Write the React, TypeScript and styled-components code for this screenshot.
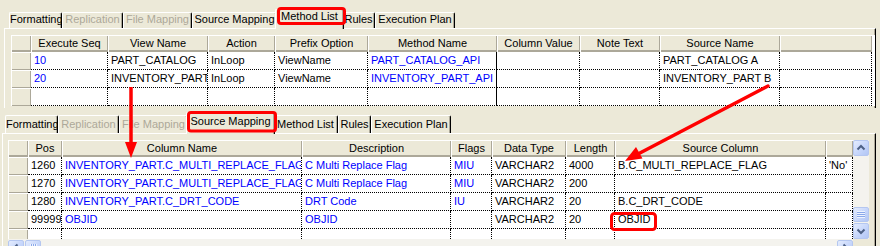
import React from "react";
import styled, { createGlobalStyle } from "styled-components";

const GlobalStyle = createGlobalStyle`
  html, body { margin: 0; padding: 0; background: #ece9d8; }
  body { font-family: "Liberation Sans", Arial, sans-serif; font-size: 11px; color: #000; }
  * { box-sizing: border-box; }
`;

const Screen = styled.div`
  position: relative;
  width: 880px;
  height: 246px;
  overflow: hidden;
  background: #ece9d8;
`;

const Shot = styled.section<{ $height: number; $top: number; $left: number }>`
  height: ${p => p.$height}px;
  padding: ${p => p.$top}px 0 0 ${p => p.$left}px;
  overflow: hidden;
  display: flex;
  flex-direction: column;
`;

const TabStrip = styled.div<{ $height: number; $inset: number; $textTop: number }>`
  flex: none;
  display: flex;
  align-items: flex-end;
  height: ${p => p.$height}px;
  padding-left: ${p => p.$inset}px;
  position: relative;
  z-index: 1;
  --text-top: ${p => p.$textTop}px;
`;

const Tab = styled.div<{ $active?: boolean; $disabled?: boolean; $width: number }>`
  position: relative;
  flex: none;
  z-index: ${p => (p.$active ? 2 : 1)};
  width: ${p => (p.$active ? p.$width + 4 : p.$width)}px;
  height: ${p => (p.$active ? "calc(100% + 1px)" : "calc(100% - 3px)")};
  margin: ${p => (p.$active ? "0 -2px -1px" : "0")};
  padding-top: var(--text-top);
  background: #ece9d8;
  border-top: 1px solid #fff;
  border-left: 1px solid #fff;
  border-right: 1px solid #000;
  border-radius: 2px 2px 0 0;
  box-shadow: inset -1px 0 #aca899;
  color: ${p => (p.$disabled ? "#aca899" : "#000")};
  text-align: center;
  line-height: 13px;
  white-space: nowrap;
`;

const Panel = styled.div<{ $width: number; $padLeft: number }>`
  flex: 1 0 auto;
  width: ${p => p.$width}px;
  border-top: 1px solid #fff;
  border-left: 1px solid #fff;
  border-right: 1px solid #000;
  box-shadow: inset -1px 0 #aca899;
  padding: 6px 0 0 ${p => p.$padLeft}px;
`;

const GridBox = styled.div<{ $template: string; $height?: number }>`
  display: grid;
  grid-template-columns: ${p => p.$template};
  grid-template-rows: 17px;
  grid-auto-rows: 18px;
  align-content: start;
  background: #fff;
  overflow: hidden;
  height: ${p => (p.$height ? `${p.$height}px` : "auto")};
`;

const HeadCell = styled.div`
  background: #ece9d8;
  box-shadow: inset 1px 1px 0 #fff, inset -1px -2px 0 #aca899;
  text-align: center;
  line-height: 16px;
  white-space: nowrap;
  overflow: hidden;
`;

const RowHead = styled.div`
  background: #ece9d8;
  box-shadow: inset 1px 1px 0 #fff, inset -1px -1px 0 #aca899;
`;

const Cell = styled.div<{ $blue?: boolean; $solid?: boolean }>`
  border-right: 1px ${p => (p.$solid ? "solid" : "dotted")} #000;
  border-bottom: 1px dotted #000;
  padding: 0 3px;
  line-height: 17px;
  color: ${p => (p.$blue ? "#0000ff" : "#000")};
  white-space: nowrap;
  overflow: hidden;
`;

const ScrollFrame = styled.div`
  display: grid;
  grid-template-columns: 845px 16px;
  grid-template-rows: 99px 17px;
  width: 861px;
`;

const VScroll = styled.div`
  display: flex;
  flex-direction: column;
  gap: 1px;
  background: #f4f3ee;
`;

const HScroll = styled.div`
  display: flex;
  gap: 1px;
  padding-top: 1px;
  background: #f4f3ee;
`;

const Corner = styled.div`
  background: #ece9d8;
`;

const Spacer = styled.div`
  flex: 1;
`;

const ScrollButton = styled.div<{ $size?: number }>`
  width: 16px;
  height: ${p => p.$size ?? 16}px;
  flex: none;
  border: 1px solid #b5c7f0;
  border-radius: 2px;
  background: linear-gradient(135deg, #e4ecfd 0%, #c6d6fb 55%, #b2c6f4 100%);
  display: flex;
  align-items: center;
  justify-content: center;
`;

const Grip = styled.div<{ $vertical?: boolean }>`
  width: ${p => (p.$vertical ? 7 : 8)}px;
  height: ${p => (p.$vertical ? 8 : 7)}px;
  background: repeating-linear-gradient(
    ${p => (p.$vertical ? "to right" : "to bottom")},
    #eef3fe 0 1px,
    #8aa8ea 1px 2px
  );
`;

const Overlay = styled.svg`
  position: absolute;
  left: 0;
  top: 0;
  z-index: 10;
  pointer-events: none;
`;

type Col = { title: string; width: number; blue?: boolean; solid?: boolean };

const tabs = [
  { label: "Formatting", width: 53 },
  { label: "Replication", width: 61, disabled: true },
  { label: "File Mapping", width: 69, disabled: true },
  { label: "Source Mapping", width: 85 },
  { label: "Method List", width: 65 },
  { label: "Rules", width: 33 },
  { label: "Execution Plan", width: 80 },
];

const methodCols: Col[] = [
  { title: "Execute Seq", width: 77, blue: true },
  { title: "View Name", width: 100 },
  { title: "Action", width: 67 },
  { title: "Prefix Option", width: 93 },
  { title: "Method Name", width: 129, blue: true, solid: true },
  { title: "Column Value", width: 83 },
  { title: "Note Text", width: 80 },
  { title: "Source Name", width: 120 },
  { title: "", width: 92 },
];

const methodRows = [
  ["10", "PART_CATALOG", "InLoop", "ViewName", "PART_CATALOG_API", "", "", "PART_CATALOG A", ""],
  ["20", "INVENTORY_PART", "InLoop", "ViewName", "INVENTORY_PART_API", "", "", "INVENTORY_PART B", ""],
  ["", "", "", "", "", "", "", "", ""],
];

const sourceCols: Col[] = [
  { title: "Pos", width: 34 },
  { title: "Column Name", width: 240, blue: true },
  { title: "Description", width: 149, blue: true },
  { title: "Flags", width: 41, blue: true },
  { title: "Data Type", width: 74 },
  { title: "Length", width: 49 },
  { title: "Source Column", width: 211 },
  { title: "", width: 27 },
];

const sourceRows = [
  ["1260", "INVENTORY_PART.C_MULTI_REPLACE_FLAG", "C Multi Replace Flag", "MIU", "VARCHAR2", "4000", "B.C_MULTI_REPLACE_FLAG", "'No'"],
  ["1270", "INVENTORY_PART.C_MULTI_REPLACE_FLAG", "C Multi Replace Flag", "MIU", "VARCHAR2", "200", "", ""],
  ["1280", "INVENTORY_PART.C_DRT_CODE", "DRT Code", "IU", "VARCHAR2", "20", "B.C_DRT_CODE", ""],
  ["99999", "OBJID", "OBJID", "", "VARCHAR2", "20", "OBJID", ""],
  ["", "", "", "", "", "", "", ""],
];

const Tabs = ({ active, height, inset, textTop }: { active: string; height: number; inset: number; textTop: number }) => (
  <TabStrip $height={height} $inset={inset} $textTop={textTop}>
    {tabs.map(t => (
      <Tab key={t.label} $width={t.width} $active={t.label === active} $disabled={t.disabled}>
        {t.label}
      </Tab>
    ))}
  </TabStrip>
);

const DataGrid = ({ cols, rows, height }: { cols: Col[]; rows: string[][]; height?: number }) => (
  <GridBox $template={["20px", ...cols.map(c => c.width + "px")].join(" ")} $height={height}>
    <HeadCell />
    {cols.map((c, i) => (
      <HeadCell key={"h" + i}>{c.title}</HeadCell>
    ))}
    {rows.map((r, ri) => (
      <React.Fragment key={ri}>
        <RowHead />
        {r.map((v, ci) => (
          <Cell key={ci} $blue={cols[ci].blue} $solid={cols[ci].solid}>
            {v}
          </Cell>
        ))}
      </React.Fragment>
    ))}
  </GridBox>
);

const Chevron = ({ dir }: { dir: "up" | "down" | "left" | "right" }) => {
  const d = {
    up: "M3.5 8.5 L7 5 L10.5 8.5",
    down: "M3.5 5.5 L7 9 L10.5 5.5",
    left: "M8.5 3.5 L5 7 L8.5 10.5",
    right: "M5.5 3.5 L9 7 L5.5 10.5",
  }[dir];
  return (
    <svg width="14" height="14" viewBox="0 0 14 14">
      <path d={d} fill="none" stroke="#4d6185" strokeWidth="2" />
    </svg>
  );
};

export default function App() {
  return (
    <Screen>
      <GlobalStyle />
      <Shot $height={108} $top={9} $left={4}>
        <Tabs active="Method List" height={19} inset={5} textTop={0} />
        <Panel $width={872} $padLeft={6}>
          <DataGrid cols={methodCols} rows={methodRows} />
        </Panel>
      </Shot>
      <Shot $height={138} $top={4} $left={2}>
        <Tabs active="Source Mapping" height={21} inset={3} textTop={2} />
        <Panel $width={874} $padLeft={5}>
          <ScrollFrame>
            <DataGrid cols={sourceCols} rows={sourceRows} height={99} />
            <VScroll>
              <ScrollButton>
                <Chevron dir="up" />
              </ScrollButton>
              <Spacer />
              <ScrollButton $size={15}>
                <Grip />
              </ScrollButton>
              <ScrollButton>
                <Chevron dir="down" />
              </ScrollButton>
            </VScroll>
            <HScroll>
              <ScrollButton>
                <Chevron dir="left" />
              </ScrollButton>
              <ScrollButton>
                <Grip $vertical />
              </ScrollButton>
              <Spacer />
              <ScrollButton>
                <Chevron dir="right" />
              </ScrollButton>
            </HScroll>
            <Corner />
          </ScrollFrame>
        </Panel>
      </Shot>
      <Overlay width={880} height={246} viewBox="0 0 880 246">
        <g fill="none" stroke="#ff0000" strokeWidth={3}>
          <rect x={278.5} y={8.5} width={66} height={15} rx={2.5} />
          <rect x={188.5} y={112.5} width={87} height={18.5} rx={2.5} />
          <rect x={611.5} y={213.5} width={44} height={16} rx={3} />
          <line x1={131} y1={87} x2={131} y2={143} strokeWidth={3.5} />
          <line x1={768} y1={86} x2={638} y2={154} strokeWidth={3.5} strokeLinecap="round" />
        </g>
        <g fill="#ff0000">
          <polygon points="125,142 137,142 131,158" />
          <polygon points="625,161 642.5,158.5 636,147" />
        </g>
      </Overlay>
    </Screen>
  );
}
